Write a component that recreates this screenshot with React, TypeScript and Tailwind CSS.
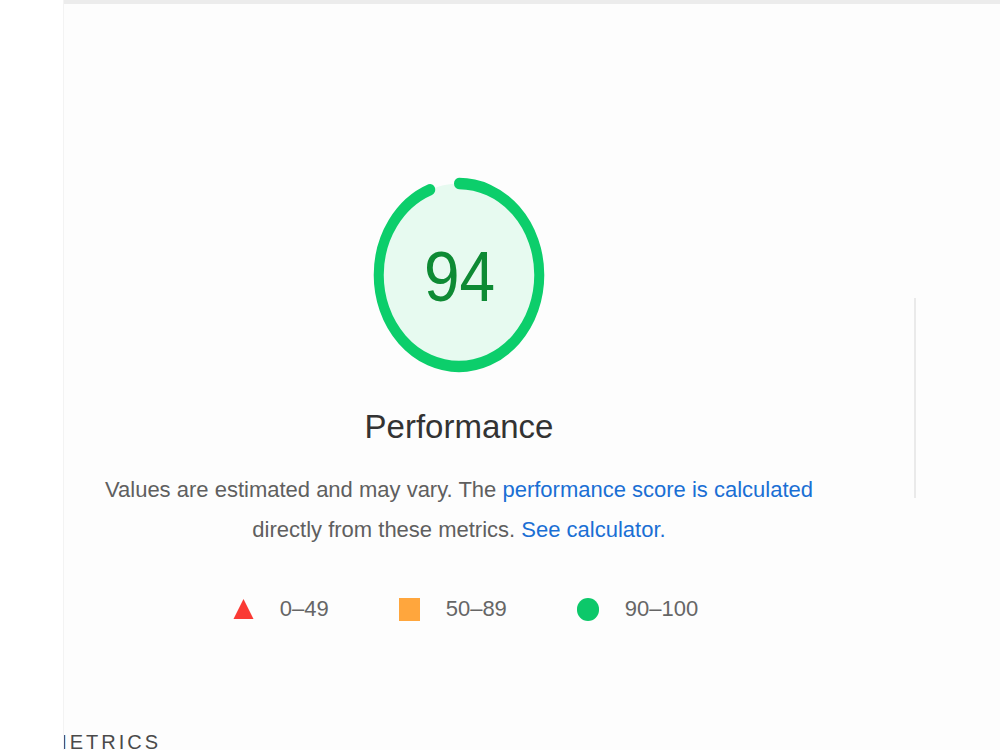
import React from "react";

const FONT = { fontFamily: '"Liberation Sans", Arial, sans-serif' };

function Gauge({ score }: { score: number }) {
  const r = 56;
  const c = 2 * Math.PI * r;
  const filled = (score / 100) * c;
  return (
    <div className="relative w-[172px] h-[196px]">
      <svg
        width={172}
        height={196}
        viewBox="0 0 120 120"
        preserveAspectRatio="none"
        className="block"
      >
        <circle cx={60} cy={60} r={r} fill="#e7faf0" />
        <circle
          cx={60}
          cy={60}
          r={r}
          fill="none"
          stroke="#0cce6b"
          strokeWidth={7}
          strokeLinecap="round"
          strokeDasharray={`${filled} ${c}`}
          transform="rotate(-90 60 60)"
        />
      </svg>
      <div className="absolute inset-0 flex items-center justify-center">
        <span
          className="text-[71px] leading-none text-[#0e8a34] scale-x-[0.9] pt-[2px]"
          style={FONT}
        >
          {score}
        </span>
      </div>
    </div>
  );
}

function LegendItem({ icon, label }: { icon: React.ReactNode; label: string }) {
  return (
    <div className="flex items-center gap-[26px]">
      {icon}
      <span className="text-[22px] leading-[24px] text-[#666]">{label}</span>
    </div>
  );
}

export default function App() {
  return (
    <div
      className="w-[1000px] h-[750px] bg-white flex overflow-hidden"
      style={FONT}
    >
      <div className="w-[63px] shrink-0 bg-white" />
      <div className="flex-1 flex flex-col border-l border-[#f3f3f3] bg-[#fdfdfd] overflow-hidden">
        <div className="h-[4px] bg-[#ececec] shrink-0" />
        <div className="flex">
          <div className="w-[790px] shrink-0 flex flex-col">
            <div className="flex flex-col items-center pt-[173px]">
              <Gauge score={94} />
              <div className="mt-[34px] text-[33px] leading-[40px] text-[#333]">
                Performance
              </div>
              <p className="mt-[23px] text-[22px] leading-[40px] text-[#5f5f5f] text-center w-[760px]">
                Values are estimated and may vary. The{" "}
                <span className="text-[#1a6fd4]">performance score is calculated</span>
                <br />
                directly from these metrics.{" "}
                <span className="text-[#1a6fd4]">See calculator.</span>
              </p>
              <div className="mt-[47px] pl-[13px] flex items-center gap-[70px]">
                <LegendItem
                  label="0–49"
                  icon={
                    <svg width={21} height={22} viewBox="0 0 21 22">
                      <polygon points="10.5,1 20.5,21 0.5,21" fill="#fa3a34" />
                    </svg>
                  }
                />
                <LegendItem
                  label="50–89"
                  icon={<div className="w-[21px] h-[23px] bg-[#ffa63d]" />}
                />
                <LegendItem
                  label="90–100"
                  icon={<div className="w-[22px] h-[23px] rounded-full bg-[#0cc86a]" />}
                />
              </div>
            </div>
            <div className="mt-[109px] -ml-[14px] text-[20px] leading-[24px] tracking-[3px] text-[#4a4a4a]">
              METRICS
            </div>
          </div>
          <div className="ml-[60px] mt-[294px] w-[2px] h-[200px] bg-[#eaeaea]" />
        </div>
      </div>
    </div>
  );
}
